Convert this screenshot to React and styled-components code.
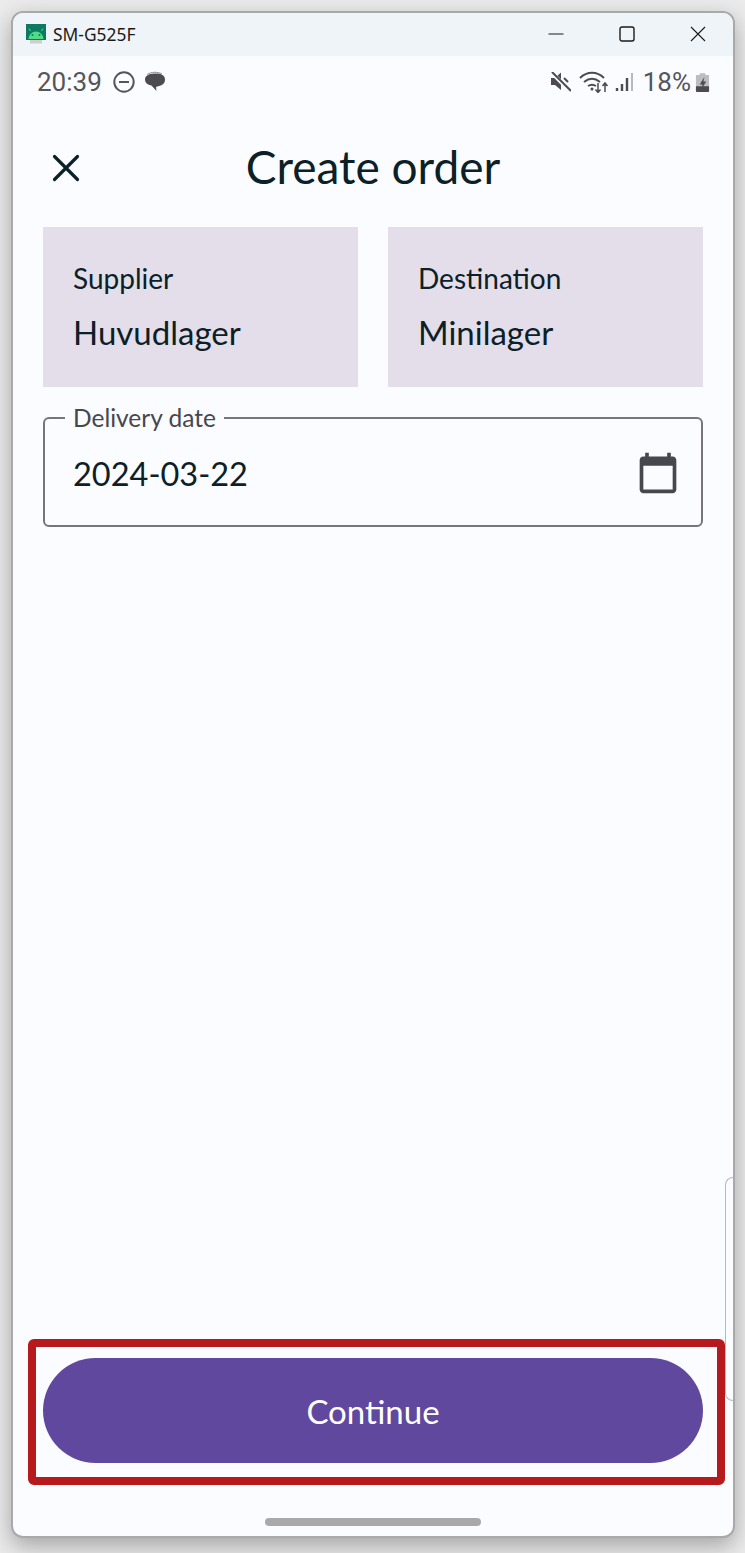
import React from 'react'
import styled, { createGlobalStyle } from 'styled-components'

const GlobalStyle = createGlobalStyle`
    html, body {
        margin: 0;
        padding: 0;
        background: #ebebeb;
    }
    * {
        box-sizing: border-box;
    }
`

const Desktop = styled.div`
    width: 745px;
    height: 1553px;
    padding: 11px 10px 15px 11px;
    overflow: hidden;
`

const Window = styled.div`
    position: relative;
    height: 100%;
    display: flex;
    flex-direction: column;
    border: 2px solid #a9a9a9;
    border-radius: 12px;
    background: #fbfcff;
    box-shadow: 0 8px 22px rgba(0, 0, 0, 0.3);
    overflow: hidden;
`

const TitleBar = styled.div`
    flex: 0 0 43px;
    display: flex;
    align-items: center;
    padding: 0 0 2px 13px;
    background: #eff4f8;
    font-family: "Noto Sans", sans-serif;
    font-size: 17.4px;
    color: #1a1a1a;
`

const TitleText = styled.span`
    margin-left: 7px;
`

const WindowControls = styled.div`
    margin-left: auto;
    display: flex;
`

const ControlButton = styled.div`
    width: 71px;
    height: 40px;
    display: flex;
    align-items: center;
    justify-content: center;
`

const StatusBar = styled.div`
    flex: 0 0 54px;
    display: flex;
    align-items: center;
    padding: 0 23px 2px 24px;
    font-family: Roboto, sans-serif;
    font-size: 26px;
    color: #55555a;
`

const StatusLeft = styled.div`
    display: flex;
    align-items: center;
    gap: 11px;
`

const StatusRight = styled.div`
    margin-left: auto;
    display: flex;
    align-items: center;
`

const StatusIcon = styled.svg`
    display: block;
    margin-left: ${(props) => props.$gap || 0}px;
`

const Percent = styled.span`
    margin-left: 10px;
`

const Header = styled.header`
    position: relative;
    flex: 0 0 117px;
    display: flex;
    align-items: center;
    justify-content: center;
    padding-bottom: 4px;
`

const CloseButton = styled.div`
    position: absolute;
    left: 39px;
    top: 44px;
    width: 28px;
    height: 28px;
`

const Title = styled.h1`
    margin: 0;
    font-family: Lato, sans-serif;
    font-weight: 400;
    font-size: 46px;
    color: #0b2027;
`

const Cards = styled.div`
    display: grid;
    grid-template-columns: 315px 315px;
    gap: 30px;
    padding: 0 30px;
`

const Card = styled.div`
    height: 160px;
    padding: 34px 30px 0;
    background: #e4deeb;
    font-family: Lato, sans-serif;
    color: #0b2027;
`

const CardLabel = styled.div`
    font-size: 28px;
    line-height: 34px;
`

const CardValue = styled.div`
    margin-top: 17px;
    font-size: 33px;
    line-height: 40px;
`

const DateField = styled.fieldset`
    margin: 18px 30px 0;
    padding: 0 21px 10px 28px;
    border: 2px solid #75757b;
    border-radius: 6px;
    font-family: Lato, sans-serif;
`

const DateLegend = styled.legend`
    margin-left: -8px;
    padding: 0 8px;
    font-size: 24.5px;
    line-height: 26px;
    color: #47474e;
`

const DateRow = styled.div`
    height: 84px;
    display: flex;
    align-items: center;
    justify-content: space-between;
`

const DateValue = styled.div`
    font-size: 32.5px;
    color: #0b2027;
`

const Spacer = styled.div`
    flex: 1;
`

const ContinueButton = styled.button`
    display: block;
    flex: 0 0 105px;
    margin: 0 30px 73px;
    border: none;
    border-radius: 53px;
    background: #61489f;
    color: #fff;
    font-family: Lato, sans-serif;
    font-size: 33px;
`

const Highlight = styled.div`
    position: absolute;
    left: 15px;
    bottom: 51px;
    width: 697px;
    height: 146px;
    border: 8px solid #b71a1c;
    border-radius: 6px;
    pointer-events: none;
`

const EdgeTab = styled.div`
    position: absolute;
    right: 0;
    top: 1164px;
    width: 8px;
    height: 224px;
    border: 1px solid #b8b8b8;
    border-right: none;
    border-radius: 8px 0 0 8px;
`

const HomeBar = styled.div`
    position: absolute;
    left: 252px;
    bottom: 10px;
    width: 216px;
    height: 8px;
    border-radius: 4px;
    background: #a9a9a9;
`

function App() {
    return (
        <Desktop>
            <GlobalStyle />
            <Window>
                <TitleBar>
                    <svg width="20" height="20" viewBox="0 0 20 20">
                        <rect x="0" y="0" width="20" height="16" fill="#0c7a63" />
                        <path d="M2.500 15a7.500 7.500 0 0 1 15 0z" fill="#4fdc84" />
                        <path d="M4.500 7L3 4.500M15.500 7L17 4.500" stroke="#4fdc84" strokeWidth="1" />
                        <circle cx="6.500" cy="11" r="1" fill="#0c7a63" />
                        <circle cx="13.500" cy="11" r="1" fill="#0c7a63" />
                        <rect x="4" y="16" width="12" height="3.500" fill="#cfcfcf" />
                    </svg>
                    <TitleText>SM-G525F</TitleText>
                    <WindowControls>
                        <ControlButton>
                            <svg width="16" height="16" viewBox="0 0 16 16"><path d="M0.500 8h15" stroke="#1a1a1a" fill="none" /></svg>
                        </ControlButton>
                        <ControlButton>
                            <svg width="16" height="16" viewBox="0 0 16 16"><rect x="1" y="1" width="14" height="14" rx="2" stroke="#1a1a1a" strokeWidth="1.400" fill="none" /></svg>
                        </ControlButton>
                        <ControlButton>
                            <svg width="16" height="16" viewBox="0 0 16 16"><path d="M1 1l14 14M15 1L1 15" stroke="#1a1a1a" strokeWidth="1.100" fill="none" /></svg>
                        </ControlButton>
                    </WindowControls>
                </TitleBar>
                <StatusBar>
                    <StatusLeft>
                        <span>20:39</span>
                        <svg width="22" height="22" viewBox="0 0 22 22">
                            <circle cx="11" cy="11" r="9.700" stroke="#55555a" strokeWidth="2" fill="none" />
                            <path d="M6 11h10" stroke="#55555a" strokeWidth="2" />
                        </svg>
                        <svg width="22" height="22" viewBox="0 0 22 22" style={{ marginLeft: -2 }}>
                            <path d="M10 2.500c6-.5 11 1 11 6 0 4-3 6-6 6.500l-3 1 .5 4-5-5.500C4 14 1 12 1 8.500 1 4.500 5 3 10 2.500z" fill="#4b4b50" />
                            <path d="M3 3.500C7 .8 14 .5 18 3" stroke="#8a8a8e" strokeWidth="1" fill="none" />
                        </svg>
                    </StatusLeft>
                    <StatusRight>
                        <StatusIcon width="21" height="20" viewBox="0 0 21 20">
                            <path d="M1 6h4l6-5.500V18l-6-5H1z" fill="#4b4b50" />
                            <path d="M14 6l4 4" stroke="#4b4b50" strokeWidth="2" />
                            <path d="M1 0l19 19" stroke="#fbfcff" strokeWidth="4" />
                            <path d="M2 0l19 19" stroke="#4b4b50" strokeWidth="2" />
                        </StatusIcon>
                        <StatusIcon $gap={8} width="30" height="22" viewBox="0 0 30 22">
                            <path d="M1 7c7-7 17-7 24 0M5 11c5-4 11-4 16 0M9 15c3-2 5-2 8 0" stroke="#4b4b50" strokeWidth="2" fill="none" />
                            <circle cx="13" cy="18" r="1.500" fill="#4b4b50" />
                            <path d="M19 12v9M16.500 18.500l2.500 3 2.500-3M26 21v-9M23.500 15l2.500-3 2.500 3" stroke="#4b4b50" strokeWidth="1.500" fill="none" />
                        </StatusIcon>
                        <StatusIcon $gap={6} width="18" height="20" viewBox="0 0 18 20">
                            <path d="M2 19v-3M7 19v-7M12 19V6" stroke="#4b4b50" strokeWidth="2.400" />
                            <path d="M17 19V1" stroke="#b9b9bd" strokeWidth="2" />
                        </StatusIcon>
                        <Percent>18%</Percent>
                        <StatusIcon $gap={4} width="15" height="21" viewBox="0 0 16 22">
                            <path d="M5 1h6v2h3a1 1 0 0 1 1 1v16a1 1 0 0 1-1 1H2a1 1 0 0 1-1-1V4a1 1 0 0 1 1-1h3z" fill="#bdbdc0" />
                            <path d="M1 15h14v5a1 1 0 0 1-1 1H2a1 1 0 0 1-1-1z" fill="#4b4b50" />
                            <path d="M10 5l-5 8h3l-1 5 5-8H9z" fill="#4b4b50" />
                        </StatusIcon>
                    </StatusRight>
                </StatusBar>
                <Header>
                    <CloseButton>
                        <svg width="28" height="28" viewBox="0 0 28 28">
                            <path d="M2.500 2.500l23 23M25.500 2.500l-23 23" stroke="#0b2027" strokeWidth="3.200" strokeLinecap="round" />
                        </svg>
                    </CloseButton>
                    <Title>Create order</Title>
                </Header>
                <Cards>
                    <Card>
                        <CardLabel>Supplier</CardLabel>
                        <CardValue>Huvudlager</CardValue>
                    </Card>
                    <Card>
                        <CardLabel>Destination</CardLabel>
                        <CardValue>Minilager</CardValue>
                    </Card>
                </Cards>
                <DateField>
                    <DateLegend>Delivery date</DateLegend>
                    <DateRow>
                        <DateValue>2024-03-22</DateValue>
                        <svg width="44" height="44" viewBox="0 0 24 24">
                            <path d="M20 3h-1V1h-2v2H7V1H5v2H4c-1.100 0-2 .9-2 2v16c0 1.100.9 2 2 2h16c1.100 0 2-.9 2-2V5c0-1.100-.9-2-2-2zm0 18H4V8h16v13z" fill="#47474e" />
                        </svg>
                    </DateRow>
                </DateField>
                <Spacer />
                <ContinueButton>Continue</ContinueButton>
                <Highlight />
                <EdgeTab />
                <HomeBar />
            </Window>
        </Desktop>
    )
}

export default App
